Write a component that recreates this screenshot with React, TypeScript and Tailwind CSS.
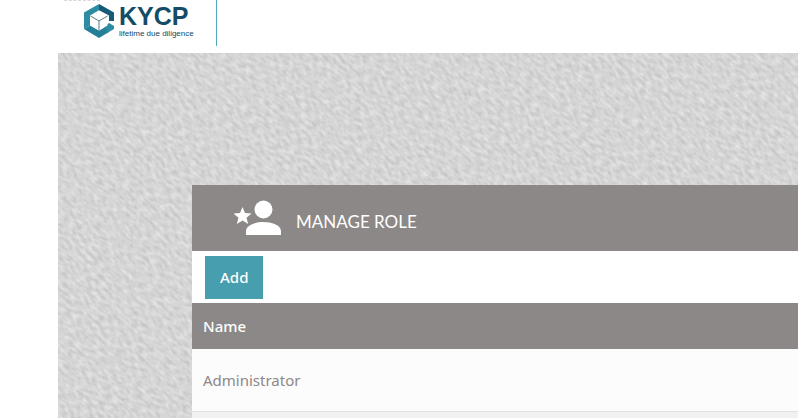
import type { ReactNode } from "react";

const roles = ["Administrator"];

function Logo() {
  return (
    <a href="#" className="flex items-start gap-[3px] pt-1 font-['Liberation_Sans',sans-serif]">
      <svg viewBox="0 0 32 34" className="h-[34px] w-8" aria-hidden="true">
        <path d="M15 0 0 8.500V25l6-3.500V11.500L15 6.300Z" fill="#2b8ca2" />
        <path d="M15 0 30 8.500V17h-5v-5.500L15 6.300Z" fill="#165a78" />
        <path d="M0 25 15 34l10-6-3-5.500-7 4-9-5Z" fill="#247f97" />
        <path d="m20 23 5-4 5 3v3l-6 3.500Z" fill="#2b8ca2" />
        <path d="m15 7 8.500 5v9.500L15 26.500 6.500 21.500V12Z" fill="#fff" />
        <path d="m6.500 12 8.500 5 8.500-5M15 17v9.500" fill="none" stroke="#4c6c7b" strokeWidth="0.9" />
      </svg>
      <span className="flex flex-col text-[#144b66]">
        <span className="text-[25px] leading-[25px] font-bold">KYCP</span>
        <span className="text-[8px] leading-[9px] text-[#0d4a60]">lifetime due diligence</span>
      </span>
    </a>
  );
}

// Diagonal woven paper behind the panel
function Texture() {
  return (
    <svg className="absolute inset-0 h-full w-full" aria-hidden="true">
      <filter id="weave" x="0" y="0" width="100%" height="100%" colorInterpolationFilters="sRGB">
        <feTurbulence type="fractalNoise" baseFrequency="0.14 0.3" numOctaves="2" seed="7" />
        <feColorMatrix values="0.2 0 0 0 0.735  0.2 0 0 0 0.735  0.2 0 0 0 0.735  0 0 0 0 1" />
      </filter>
      <rect width="100%" height="100%" fill="#d5d5d5" />
      <g transform="rotate(42)">
        <rect x="-100" y="-1400" width="2800" height="2800" filter="url(#weave)" />
      </g>
    </svg>
  );
}

function RoleIcon() {
  return (
    <svg viewBox="0 0 48 36" className="h-9 w-12" fill="#fff" aria-hidden="true">
      <circle cx="29.500" cy="9.500" r="9" />
      <path d="M12 35v-4c0-6 10-9 17.500-9S47 25 47 31v4Z" />
      <path d="m8.500 7 2.500 6 6.500.5-5 4.200 1.700 6.300-5.700-3.400-5.700 3.400 1.700-6.300-5-4.200 6.500-.5Z" />
    </svg>
  );
}

function Panel({ title, children }: { title: string; children: ReactNode }) {
  return (
    <section className="relative flex grow flex-col bg-white">
      <div className="flex h-[66px] items-center gap-3.5 bg-[#8c8887] pl-[42px]">
        <RoleIcon />
        <h1 className="pt-2 font-['Lato',sans-serif] text-[17px] leading-6 text-white">{title}</h1>
      </div>
      {children}
    </section>
  );
}

export default function App() {
  return (
    <div className="flex h-screen flex-col overflow-hidden bg-white font-['Noto_Sans','Open_Sans',sans-serif]">
      <header className="relative flex h-[53px] shrink-0 items-start pl-[84px]">
        <div className="absolute top-0 left-16 w-9 border-t border-dashed border-[#d8d8d8]" />
        <Logo />
        <div className="ml-[22px] h-[46px] w-px bg-[#4fa9b8]" />
      </header>

      <main className="relative mr-0.5 ml-[58px] flex grow flex-col pt-[132px] pl-[134px]">
        <Texture />
        <Panel title="MANAGE ROLE">
          <div className="flex h-[52px] shrink-0 items-center pl-[13px]">
            <button type="button" className="h-[43px] bg-[#469eae] px-[15px] text-[15px] font-medium text-white">
              Add
            </button>
          </div>
          <table className="w-full text-left text-[15px]">
            <thead>
              <tr className="h-[46px] bg-[#8c8887] text-white">
                <th scope="col" className="px-[11px] font-medium">
                  Name
                </th>
              </tr>
            </thead>
            <tbody className="text-[#8c8887]">
              {roles.map((role) => (
                <tr key={role} className="h-[62px] border-b border-[#e2e2e2] bg-[#fcfcfc]">
                  <td className="px-[11px]">{role}</td>
                </tr>
              ))}
            </tbody>
          </table>
          <div className="grow bg-[#f1f1f1]" />
        </Panel>
      </main>
    </div>
  );
}
